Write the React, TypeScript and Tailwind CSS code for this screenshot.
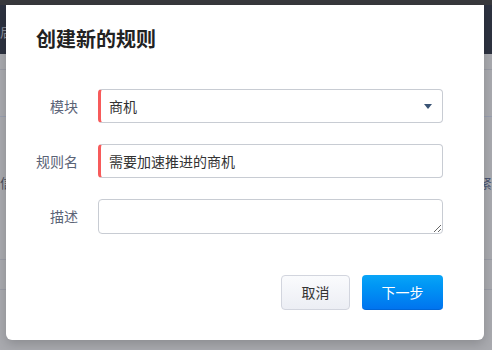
const font = { fontFamily: '"Noto Sans CJK SC", "Noto Sans", sans-serif' };

function Field({ label, children }: { label: string; children: React.ReactNode }) {
  return (
    <div className="flex items-center">
      <div className="w-[72px] text-right text-[14px] text-[#5b6376]">{label}</div>
      <div className="ml-[20px] flex-1">{children}</div>
    </div>
  );
}

export default function App() {
  return (
    <div className="relative w-[492px] h-[350px] overflow-hidden bg-[#a9aaaf]" style={font}>
      {/* dimmed page behind the dialog */}
      <div className="h-[5px] bg-[#38393d]" />
      <div className="h-[49px] bg-[#2d3240] flex items-start">
        <span className="text-[13px] leading-[16px] text-[#8a8f9c] mt-[19px]">后</span>
      </div>
      <div className="h-[15px]" />
      <div className="h-px bg-[#9b9da6]" />
      <div className="h-[46px]" />
      <div className="h-px bg-[#9aa0b0]" />
      <div className="flex justify-between items-center h-[142px]">
        <span className="text-[13px] text-[#4a4f5c] mt-[-10px]">信</span>
        <span className="text-[13px] text-[#4a5470] mt-[-10px]">紧</span>
      </div>
      <div className="h-px bg-[#9b9da6]" />
      <div className="h-[29px]" />
      <div className="h-px bg-[#9b9da6]" />

      {/* dialog */}
      <div className="absolute left-[6px] top-[5px] w-[478px] h-[335px] bg-white rounded-b-[6px] shadow-[0_4px_12px_rgba(0,0,0,0.18)]">
        <div className="pt-[20px] pl-[30px] text-[20px] leading-[28px] font-bold text-[#222]">创建新的规则</div>

        <div className="mt-[36px] pr-[41px] flex flex-col gap-[21px]">
          <Field label="模块">
            <div className="h-[34px] flex items-center justify-between border border-[#c8ccd3] border-l-[3px] border-l-[#f75b5b] rounded-[4px] pl-[8px] pr-[10px] text-[14px] text-[#333]">
              <span>商机</span>
              <svg width="8" height="5" viewBox="0 0 8 5">
                <path d="M0 0h8L4 5z" fill="#3a5474" />
              </svg>
            </div>
          </Field>
          <Field label="规则名">
            <div className="h-[34px] flex items-center border border-[#c8ccd3] border-l-[3px] border-l-[#f75b5b] rounded-[4px] pl-[8px] text-[14px] text-[#333]">
              需要加速推进的商机
            </div>
          </Field>
          <Field label="描述">
            <textarea className="block w-full h-[35px] border border-[#c8ccd3] rounded-[4px] outline-none text-[14px]" />
          </Field>
        </div>

        <div className="mt-[41px] pr-[41px] flex justify-end gap-[12px]">
          <button className="w-[69px] h-[35px] rounded-[4px] border border-[#d2d5de] bg-gradient-to-b from-[#fafbfd] to-[#eceef4] text-[14px] text-[#333]">
            取消
          </button>
          <button className="w-[81px] h-[35px] rounded-[4px] border-b border-[#0066d8] bg-gradient-to-b from-[#0aa5f7] to-[#0074ef] text-[14px] text-white">
            下一步
          </button>
        </div>
      </div>
    </div>
  );
}
